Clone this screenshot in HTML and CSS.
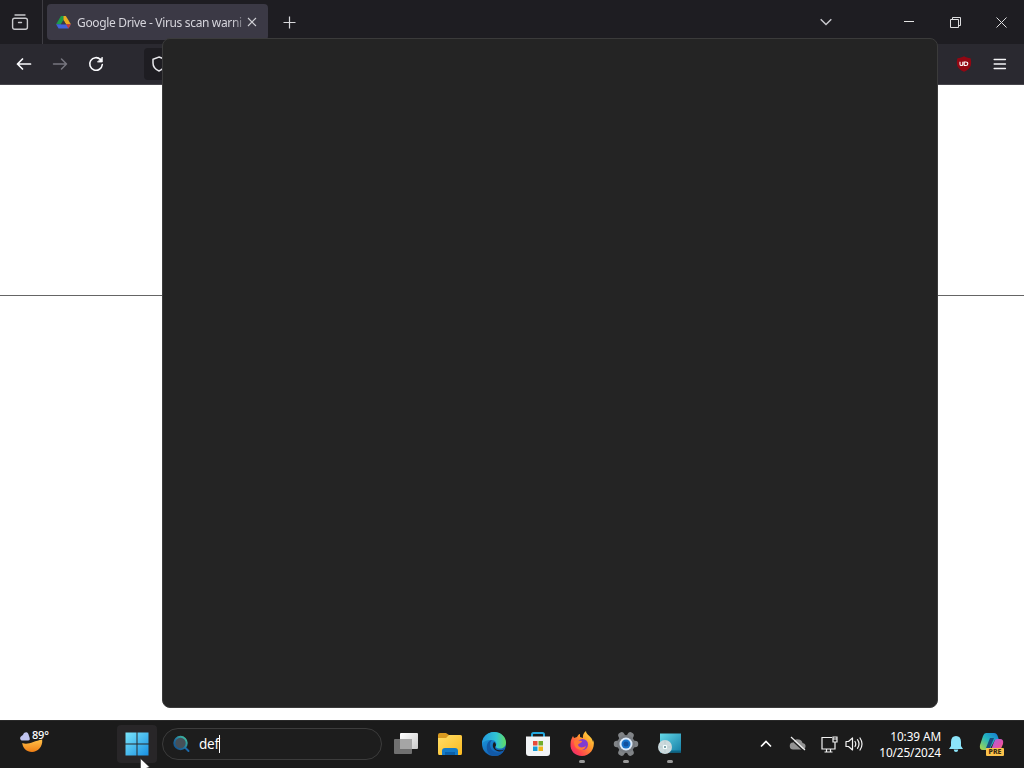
FILE: index.html
```html
<!DOCTYPE html>
<html lang="en">
<head>
<meta charset="utf-8">
<title>Google Drive - Virus scan warning</title>
<link rel="stylesheet" href="styles.css">
</head>
<body>
<div class="desktop">
  <header class="tabbar">
    <div class="firefox-view">
      <svg width="18" height="18" viewBox="0 0 18 18" fill="none" stroke="#c8c8cc" stroke-width="1.4" stroke-linecap="round"><path d="M4 2H14"/><rect x="1.6" y="5.3" width="14.8" height="11" rx="2"/><path d="M7.500 9.500h3"/></svg>
    </div>
    <div class="tab">
      <svg class="drive" width="15" height="13" viewBox="0 0 16 14"><path d="M5.300 0h3.200L8 4.500 5.200 9H0z" fill="#1b9c4b"/><path d="M8 0h2.500L16 9h-5.400L8 4.500z" fill="#e9ac20"/><path d="M2.800 9H16l-2.700 4.500H2.700L0 9z" fill="#4064db"/><path d="M10.600 9H16l-2.700 4.500z" fill="#cb3b32"/><path d="M8 4.300L10.700 9H5.300z" fill="#3b3945"/></svg>
      <span class="tab-title">Google Drive - Virus scan warni</span>
      <svg class="tab-close" width="10" height="10" viewBox="0 0 10 10" stroke="#d0d0d5" stroke-width="1.1"><path d="M1 1l8 8M9 1L1 9"/></svg>
    </div>
    <svg class="new-tab" width="13" height="13" viewBox="0 0 13 13" stroke="#d8d8dc" stroke-width="1.2"><path d="M6.500 .500v12M.500 6.500h12"/></svg>
    <div class="spacer"></div>
    <div class="caption list"><svg width="12" height="8" viewBox="0 0 12 8" fill="none" stroke="#c8c8cd" stroke-width="1.500"><path d="M.700 1.200L6 6.500l5.300-5.300"/></svg></div>
    <div class="caption"><svg width="10" height="10" viewBox="0 0 10 10" stroke="#e4e4e4"><path d="M0 4.500h10"/></svg></div>
    <div class="caption"><svg width="11" height="11" viewBox="0 0 11 11" fill="none" stroke="#dedee0"><path d="M.500 2.500h8v8h-8zM2.500 2.500v-2h8v8h-2"/></svg></div>
    <div class="caption"><svg width="11" height="11" viewBox="0 0 11 11" stroke="#dedee0"><path d="M.500 .500l10 10M10.500 .500l-10 10"/></svg></div>
  </header>
  <div class="toolbar">
    <div class="nav"><svg width="16" height="16" viewBox="0 0 16 16" fill="none" stroke="#fbfbfe" stroke-width="1.700" stroke-linecap="round" stroke-linejoin="round"><path d="M14.500 8h-13M6.500 3L1.500 8l5 5"/></svg></div>
    <div class="nav"><svg width="16" height="16" viewBox="0 0 16 16" fill="none" stroke="#77767f" stroke-width="1.500" stroke-linecap="round" stroke-linejoin="round"><path d="M1.500 8h13M9.500 3l5 5-5 5"/></svg></div>
    <div class="nav"><svg width="16" height="16" viewBox="0 0 16 16" fill="none" stroke="#fbfbfe" stroke-width="1.600" stroke-linecap="round"><path d="M12.500 3.500A6.300 6.300 0 1 0 14.300 8.500"/><path d="M14.300 1.500v4.500H9.800z" fill="#fbfbfe" stroke-width=".8"/></svg></div>
    <div class="address"><svg width="16" height="16" viewBox="0 0 16 16" fill="none" stroke="#e8e8ec" stroke-width="1.500"><path d="M8 1L14 3.200V7c0 4-2.500 6.500-6 8-3.500-1.500-6-4-6-8V3.200z"/></svg></div>
    <div class="extension"><svg width="16" height="16" viewBox="0 0 16 16"><path d="M8 .200c2 1.300 4 1.500 6.500 2 .7 1.800.9 5 .3 7.300C14 12.500 11 14.500 8 15.800 5 14.500 2 12.500 1.200 9.500.600 7 .800 4 1.500 2.200 4 1.700 6 1.500 8 .200z" fill="#930713"/><path d="M4 5.800v2.400q0 1.300 1.400 1.300t1.400-1.300V5.800M8.200 6h1.500q2.100 0 2.100 1.700t-2.100 1.800H8.200z" fill="none" stroke="#fff" stroke-width="1.100"/></svg></div>
    <div class="menu"><svg width="14" height="12" viewBox="0 0 14 12" stroke="#f4f4f6" stroke-width="1.500" stroke-linecap="round"><path d="M1.200 1.500h11.200M1.200 6h11.200M1.200 10.500h11.200"/></svg></div>
  </div>
  <main class="page"><hr class="rule"></main>
  <footer class="taskbar">
    <div class="weather">
      <svg width="26" height="27" viewBox="0 0 26 27"><defs><linearGradient id="moon" x2="0" y2="1"><stop stop-color="#ffc24a"/><stop offset="1" stop-color="#ef7e14"/></linearGradient></defs><path d="M4.200 15c6 2.500 11.500-2 20-3.500C25 19 19.500 24 14 24S5 20.500 4.200 15z" fill="url(#moon)"/><path d="M3.500 12.500a2.500 2.500 0 0 1 0-4.500Q5 7.500 6 5q4-2.500 5 3 2 4.500-1 4.500z" fill="#bfc3ef"/></svg>
      <span class="temp">89°</span>
    </div>
    <div class="start"><svg width="24" height="24" viewBox="0 0 24 24"><defs><linearGradient id="win" gradientUnits="userSpaceOnUse" x1="0" y1="0" x2="24" y2="24"><stop stop-color="#7ce7fb"/><stop offset="1" stop-color="#168ee2"/></linearGradient></defs><path d="M.500 .500h11v11H.500zm12 0h11v11h-11zm-12 12h11v11H.500zm12 0h11v11h-11z" fill="url(#win)"/></svg></div>
    <div class="search">
      <svg width="18" height="18" viewBox="0 0 18 18" fill="none"><defs><linearGradient id="lens" x1="1" x2="0" y2="1"><stop stop-color="#43c6a0"/><stop offset=".6" stop-color="#1d6b9e"/><stop offset="1" stop-color="#144e87"/></linearGradient></defs><path d="M12 12.500l3.500 3.500" stroke="#1b69aa" stroke-width="2" stroke-linecap="round"/><circle cx="7.500" cy="8" r="6.200" fill="#455059" stroke="url(#lens)" stroke-width="2"/></svg>
      <span class="query">def</span><span class="caret"></span>
    </div>
    <div class="apps">
      <div class="app"><svg width="28" height="28" viewBox="0 0 28 28"><defs><linearGradient id="tvf" x2="1" y2="1"><stop stop-color="#fff"/><stop offset="1" stop-color="#c9c9c9"/></linearGradient></defs><rect x="8" y="3" width="18" height="16" rx="1" fill="url(#tvf)"/><rect x="2" y="9" width="18" height="15" rx="1" fill="#707070"/><path d="M8 9h12v10H8z" fill="#a5a5a5"/></svg></div>
      <div class="app"><svg width="28" height="28" viewBox="0 0 28 28"><defs><linearGradient id="fold" x2="1" y2="1"><stop stop-color="#ffdf69"/><stop offset="1" stop-color="#fbb91f"/></linearGradient></defs><path d="M2 5q0-2 2-2h6l3 2h11q2 0 2 2v4H2z" fill="#d99a20"/><path d="M2 8h8l3-3h11q2 0 2 2v16q0 2-1 2H3q-1 0-1-2z" fill="url(#fold)"/><path d="M6 25v-4q0-3 3-3h10q3 0 3 3v4z" fill="#147bc8"/><path d="M9 22h10v3H9z" fill="#0b60a9"/></svg></div>
      <div class="app"><svg width="28" height="28" viewBox="0 0 28 28"><defs><linearGradient id="edge1" x2="1"><stop stop-color="#2499df"/><stop offset=".6" stop-color="#30c5d3"/><stop offset="1" stop-color="#63dc61"/></linearGradient><linearGradient id="edge2" x2=".5" y2="1"><stop stop-color="#1ba2e2"/><stop offset="1" stop-color="#135fb4"/></linearGradient></defs><circle cx="14" cy="14" r="12" fill="url(#edge2)"/><path d="M2 14C2 7 7.500 2 14 2c7 0 12 5 12 10.500 0 4-3 6-6 6-3.500 0-5-1.500-4-3 1-2 0-5-4-5.500C8 9.500 3 11 2 14z" fill="url(#edge1)"/><path d="M12 10c-3 3-3 10 4 12.500 3 1 6 .2 8-1.500-2 3.500-6 5.500-10 5C8 25 6 20 7 15c.7-3 2.500-4.500 5-5z" fill="#1259a6"/><path d="M14 12c-3 4 0 9 5 9.500 3 .2 5-1.500 5-2-5 2-9 0-9-2 0-1 1-1.500 1-2.500s-1-2.500-2-3z" fill="#1b1b1b"/></svg></div>
      <div class="app"><svg width="28" height="28" viewBox="0 0 28 28"><path d="M8 7V4.500Q8 3 9.500 3h9Q20 3 20 4.500V7" fill="none" stroke="#23a8df" stroke-width="2"/><path d="M2 6.500h24V23q0 3-3 3H5q-3 0-3-3z" fill="#f2f4f6"/><path d="M9 11h4.500v4.500H9z" fill="#e94b3c"/><path d="M14.500 11H19v4.500h-4.500z" fill="#72ad2b"/><path d="M9 16.500h4.500V21H9z" fill="#179bd7"/><path d="M14.500 16.500H19V21h-4.500z" fill="#efb51b"/></svg></div>
      <div class="app"><svg width="28" height="28" viewBox="0 0 28 28"><defs><linearGradient id="fox" x1="1" x2="0" y2="1"><stop stop-color="#fff04a"/><stop offset=".4" stop-color="#ff982c"/><stop offset=".75" stop-color="#ff404f"/><stop offset="1" stop-color="#d92783"/></linearGradient></defs><path d="M5 6l1 2 3-1c1-2 2-3 3-3v3l3 1c-.5-3 .5-5 3-7 0 4 6 5 7 11l.500-2c2 9-4 16-11.500 16C7 26 2 21 2.500 14 2.500 10 4 8 5 6z" fill="url(#fox)"/><circle cx="14.500" cy="14.500" r="5.500" fill="#803bd0"/><path d="M6 11c3-2 5 0 8 0 0 2-3 2-4 4 1 3 5 3 8 1-1 4-5 5-8 3-3-1-4-4-4-8z" fill="#ff7934"/></svg><i></i></div>
      <div class="app"><svg width="28" height="28" viewBox="0 0 28 28"><g stroke="#818487" stroke-width="6.500" stroke-linecap="round"><path d="M9.500 5.500l9 17M18.500 5.500l-9 17M5 14h18"/></g><circle cx="14" cy="14" r="9" fill="#777b80"/><circle cx="14" cy="14" r="6.500" fill="#dceafa"/><circle cx="14" cy="14" r="4.500" fill="#1772ca"/><circle cx="14" cy="14" r="2.500" fill="#12509e"/></svg><i></i></div>
      <div class="app"><svg width="28" height="28" viewBox="0 0 28 28"><defs><linearGradient id="screen" x2="1" y2="1"><stop stop-color="#65d9e9"/><stop offset="1" stop-color="#147da5"/></linearGradient></defs><path d="M4 3.500h21v19H4z" fill="url(#screen)"/><path d="M4 20.500h21v2H4z" fill="#0c6688"/><circle cx="9" cy="17" r="7" fill="#ccdadd"/><path d="M9 10v14M2 17h14" stroke="#b2c5c9" stroke-width=".7"/><circle cx="9" cy="17" r="2.300" fill="#f6ffff"/><circle cx="9" cy="17" r="1" fill="#5b8690"/></svg><i></i></div>
    </div>
    <div class="tray">
      <svg class="chevron" width="12" height="8" viewBox="0 0 12 8" fill="none" stroke="#fff" stroke-width="1.600"><path d="M1 6.500l5-5 5 5"/></svg>
      <svg class="cloud" width="18" height="16" viewBox="0 0 18 16"><path d="M4.500 13.500a3.500 3.500 0 0 1-.5-7Q6 2 10 3.500 13 4 13.500 7q3.500.5 3 4-.5 2.500-3 2.500z" fill="#929292"/><path d="M1.800 3l13 12" stroke="#1b1b1b" stroke-width="1.200"/><path d="M2 1l14 13" stroke="#eee" stroke-width="1.200"/></svg>
      <svg class="network" width="17" height="17" viewBox="0 0 17 17" fill="none" stroke="#f2f2f2" stroke-width="1.200"><path d="M11 1.500H1v11.500h13V8M5.500 13v3M9.500 13v3M3.500 16h8M12 1h4v5h-4zM14 6v2M12 3h4"/></svg>
      <svg class="volume" width="18" height="16" viewBox="0 0 18 16" fill="none" stroke="#f2f2f2" stroke-width="1.200" stroke-linejoin="round" stroke-linecap="round"><path d="M1 5.500h2.500L7.500 2v12l-4-3.500H1zM10 5.500q1.500 2.500 0 5M12.500 3.700q3 4.300 0 8.600M15 2q4 6 0 12"/></svg>
      <div class="clock"><span>10:39 AM</span><span>10/25/2024</span></div>
      <svg class="bell" width="16" height="18" viewBox="0 0 16 18" fill="#8ce5fa"><path d="M3 7q0-6 5-6t5 6v4l2 3H1l2-3zM5.700 14.500h4.600q-.3 2.500-2.300 2.500t-2.300-2.500z"/></svg>
      <div class="copilot"><svg width="26" height="26" viewBox="0 0 26 26"><defs><linearGradient id="cop1" x1="1" x2="0" y2="1"><stop stop-color="#1576d4"/><stop offset=".5" stop-color="#25b8bd"/><stop offset="1" stop-color="#b8d83e"/></linearGradient><linearGradient id="cop2" x2="1" y2="1"><stop stop-color="#8f6cf0"/><stop offset=".6" stop-color="#e550a8"/><stop offset="1" stop-color="#ff9651"/></linearGradient></defs><path d="M7 2h8q3 0 4 4l1 3h-4l-4 7q-1 3-4 3H4q-4 0-3-5L4 5q1-3 3-3z" fill="url(#cop1)"/><path d="M18 8h3q4 0 3 5l-3 7q-1 3-4 3H9q2-1 3-4l3-8q1-3 3-3z" fill="url(#cop2)"/><path d="M11 7h4l-4 10H7z" fill="#164e80"/></svg><span class="pre">PRE</span></div>
    </div>
  </footer>
  <div class="search-panel"></div>
  <svg class="cursor" width="10" height="10" viewBox="0 0 10 10"><path d="M.500 .500v12l9-3.500z" fill="#fff" stroke="#222" stroke-width=".5"/></svg>
</div>
</body>
</html>
```
FILE: styles.css
```css
* { box-sizing: border-box; }
body { margin: 0; font-family: "Noto Sans", "Open Sans", sans-serif; }
svg { display: block; flex: none; }
.desktop { position: relative; width: 1024px; height: 768px; overflow: hidden; display: flex; flex-direction: column; background: #fff; }
.tabbar { height: 44px; flex: none; display: flex; align-items: center; background: #1e1d22; }
.firefox-view { width: 43px; height: 44px; padding-right: 3px; display: flex; align-items: center; justify-content: center; border-right: 1px solid #3e3d43; }
.tab { width: 221px; height: 36px; margin-left: 4px; padding: 0 11px 0 9px; display: flex; align-items: center; border-radius: 4px; background: #3b3945; }
.tab-title { margin-left: 6px; padding-top: 1px; white-space: nowrap; font-size: 12px; line-height: 18px; letter-spacing: -.34px; color: #d6d5dc; mask-image: linear-gradient(90deg, #000 94%, #0006); }
.tab-close { margin-left: auto; }
.new-tab { margin-left: 15px; }
.spacer { flex: 1; }
.caption { width: 46px; height: 44px; display: flex; align-items: center; justify-content: center; }
.caption.list { margin-right: 37px; }
.toolbar { height: 41px; flex: none; display: flex; align-items: center; padding-left: 6px; background: #2a2930; border-bottom: 1px solid #46454b; }
.nav { width: 36px; display: flex; justify-content: center; }
.address { flex: 0 0 784px; height: 32px; margin-left: 30px; padding-left: 7px; display: flex; align-items: center; border-radius: 4px; background: #1e1d22; }
.extension { width: 36px; margin-left: 18px; display: flex; justify-content: center; }
.menu { width: 36px; display: flex; justify-content: center; }
.page { flex: 1; padding-top: 210px; background: #fff; }
.rule { height: 1px; margin: 0; border: 0; background: #656565; }
.taskbar { height: 48px; flex: none; display: flex; align-items: center; padding-bottom: 1px; background: #1b1b1b; border-top: 1px solid #292929; color: #fff; }
.weather { width: 99px; height: 32px; margin-left: 18px; display: flex; align-items: flex-start; }
.temp { margin-left: -12px; font-size: 11px; font-weight: 500; line-height: 13px; letter-spacing: -.2px; z-index: 1; }
.start { width: 40px; height: 38px; display: flex; align-items: center; justify-content: center; border-radius: 4px; background: #282628; }
.search { width: 220px; height: 32px; margin-left: 5px; padding-left: 10px; display: flex; align-items: center; border: 1px solid #3c3c3c; border-radius: 16px; background: #1d1d1d; }
.query { margin-left: 8px; font-size: 13.5px; line-height: 20px; letter-spacing: -.2px; }
.caret { width: 1px; height: 18px; background: #fff; }
.apps { display: flex; margin-left: 2px; }
.app { position: relative; width: 44px; height: 44px; display: flex; align-items: center; justify-content: center; }
.app i { position: absolute; left: 19px; bottom: 3px; width: 6px; height: 3px; border-radius: 2px; background: #999; }
.tray { flex: 1; display: flex; align-items: center; }
.chevron { margin-left: 68px; }
.cloud { margin-left: 17px; }
.network { margin-left: 14px; }
.volume { margin-left: 7px; }
.clock { width: 78px; padding-bottom: 1px; display: flex; flex-direction: column; align-items: flex-end; font-size: 11.8px; line-height: 16px; letter-spacing: -.1px; white-space: nowrap; }
.bell { margin-left: 7px; }
.copilot { position: relative; margin-left: 15px; }
.pre { position: absolute; left: 7px; bottom: 1px; width: 18px; height: 8px; border-radius: 1px; background: #fbc24b; color: #372910; font-size: 7px; font-weight: 800; line-height: 8px; text-align: center; }
.search-panel { position: absolute; left: 162px; top: 38px; width: 776px; height: 670px; border: 1px solid #3b3b3b; border-radius: 8px; background: #242424; }
.cursor { position: absolute; left: 140px; top: 758px; }
```
